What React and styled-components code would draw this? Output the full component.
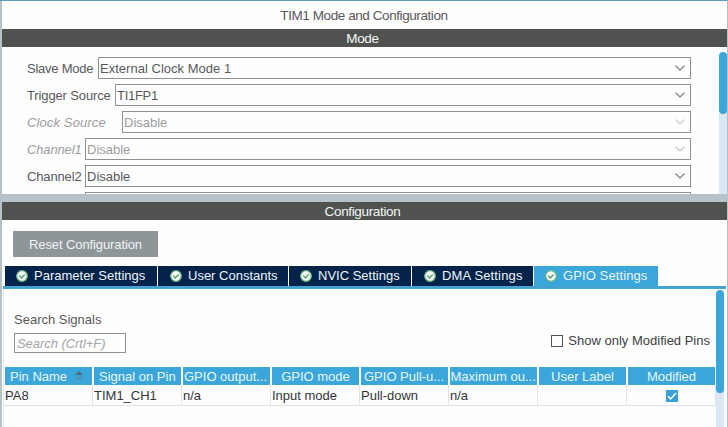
import React from 'react';
import styled, { createGlobalStyle } from 'styled-components';

const Global = createGlobalStyle`
  * { box-sizing: border-box; }
  body { margin: 0; overflow: hidden; background: #b6c1c8; }
`;

const Window = styled.div`
  width: 728px;
  height: 427px;
  display: flex;
  flex-direction: column;
  gap: 8px;
  border-top: 1px solid #5c99bd;
  border-right: 1px solid #b9bfc4;
  padding-left: 2px;
  background: #b6c1c8;
  font: 13px/18px 'Liberation Sans', Arial, sans-serif;
  color: #58595c;
  white-space: nowrap;
  overflow: hidden;
`;

const ModePanel = styled.section`
  height: 193px;
  display: flex;
  flex-direction: column;
  background: #fefefe;
  overflow: hidden;
`;

const Title = styled.h1`
  margin: 0;
  height: 28px;
  flex: none;
  font-size: 13.5px;
  font-weight: normal;
  line-height: 29px;
  letter-spacing: -0.42px;
  text-align: center;
  padding-right: 1px;
`;

const Bar = styled.h2`
  margin: 0;
  height: 18px;
  flex: none;
  font-size: 13.5px;
  font-weight: normal;
  line-height: 19px;
  letter-spacing: -0.35px;
  text-align: center;
  padding-right: 4px;
  color: #f4f6f6;
  background: #50524f;
`;

const ModeBody = styled.div`
  flex: 1;
  min-height: 0;
  display: flex;
  justify-content: space-between;
`;

const Fields = styled.div`
  width: 664px;
  margin: 10px 0 0 25px;
  display: flex;
  flex-direction: column;
  gap: 5px;
  overflow: hidden;
`;

const Field = styled.div`
  height: 22px;
  flex: none;
  display: flex;
  color: ${(p) => (p.$disabled ? '#9b9da0' : '#58595c')};
`;

const FieldLabel = styled.label`
  width: ${(p) => p.$width}px;
  flex: none;
  line-height: 23px;
  letter-spacing: ${(p) => p.$spacing || 0}px;
  font-style: ${(p) => (p.$disabled ? 'italic' : 'normal')};
`;

const Select = styled.div`
  flex: 1;
  display: flex;
  align-items: center;
  justify-content: space-between;
  border: 1px solid #8d9395;
  padding: 0 5px 0 1px;
  line-height: 21px;
  letter-spacing: ${(p) => p.$spacing || 0}px;
`;

const Track = styled.div`
  width: 8px;
  height: ${(p) => p.$height}px;
  flex: none;
  margin-top: ${(p) => p.$top}px;
  background: linear-gradient(#fefefe 4px, #dae8f5 4px);
`;

const Thumb = styled.div`
  height: ${(p) => p.$height}px;
  border-radius: 4px;
  background: #3aa6d9;
`;

const ConfigPanel = styled.section`
  flex: 1;
  display: flex;
  flex-direction: column;
  background: #fefefe;
  overflow: hidden;
`;

const ResetButton = styled.button`
  width: 145px;
  height: 26px;
  flex: none;
  margin: 11px 0 9px 11px;
  padding: 0;
  border: 0;
  font: inherit;
  line-height: 27px;
  letter-spacing: -0.1px;
  color: #f0f3f4;
  background: #8f9699;
`;

const Tabs = styled.nav`
  height: 23px;
  flex: none;
  display: flex;
  gap: 1px;
  margin: 0 1px;
  padding-left: 2px;
  border-bottom: 3px solid #43a2d0;
`;

const Tab = styled.div`
  width: ${(p) => p.$width}px;
  height: 20px;
  display: flex;
  align-items: center;
  gap: 6px;
  padding: 0 0 1px ${(p) => p.$inset}px;
  line-height: 19px;
  letter-spacing: ${(p) => p.$spacing || 0}px;
  color: #edf5fa;
  background: ${(p) => (p.$active ? '#3aa6d9' : '#03234b')};
`;

const TabBody = styled.div`
  flex: 1;
  min-height: 0;
  display: flex;
  margin: 0 3px 0 1px;
  border-left: 1px solid #e4e8eb;
`;

const Content = styled.div`
  width: 712px;
  padding: 22px 0 0 1px;
`;

const Filters = styled.div`
  display: flex;
  justify-content: space-between;
  height: 56px;
  padding: 0 6px 0 9px;
`;

const SearchGroup = styled.div`
  display: flex;
  flex-direction: column;
  gap: 5px;
`;

const SearchBox = styled.div`
  width: 112px;
  height: 20px;
  margin-top: -1px;
  padding-left: 2px;
  border: 1px solid #8d9395;
  font-style: italic;
  line-height: 19px;
  letter-spacing: -0.05px;
  color: #a3a5a7;
`;

const CheckLabel = styled.label`
  height: 18px;
  margin-top: 21px;
  display: flex;
  align-items: center;
  gap: 5px;
  color: #3f4043;
`;

const CheckBox = styled.span`
  width: 12px;
  height: 12px;
  border: 1px solid #525457;
`;

const Grid = styled.div`
  display: grid;
  grid-template-columns: repeat(8, 89px);
`;

const HeadCell = styled.div`
  height: 18px;
  margin-right: 2px;
  display: flex;
  align-items: center;
  justify-content: ${(p) => (p.$start ? 'flex-start' : 'center')};
  gap: 8px;
  padding-left: ${(p) => p.$start || 0}px;
  line-height: 19px;
  color: #e9f6fc;
  background: #3aa6d9;
  overflow: hidden;
`;

const Cell = styled.div`
  height: 21px;
  margin: 0 1px 0 -1px;
  padding: 1px 0 0 1px;
  line-height: 20px;
  color: #333437;
  border-right: 1px solid #dfe1e3;
  border-bottom: 1px solid #dfe1e3;
  display: flex;
  justify-content: ${(p) => (p.$center ? 'center' : 'flex-start')};
  align-items: center;
`;

const Chevron = ({ disabled }) => (
  <svg width="10" height="6" viewBox="0 0 10 6">
    <path d="M.5 .7 5 5 9.5 .7" fill="none" stroke={disabled ? '#c2c4c6' : '#707376'} strokeWidth="1.15" />
  </svg>
);

const StatusIcon = () => (
  <svg width="12" height="12" viewBox="0 0 12 12">
    <circle cx="6" cy="6" r="5.3" fill="#f4fbf4" stroke="#6db787" strokeWidth="1.2" />
    <path d="M3.2 5.6 5.4 8 8.8 4.4" fill="none" stroke="#4f9c68" strokeWidth="1.3" />
  </svg>
);

const SortIcon = () => (
  <svg width="8" height="10" viewBox="0 0 8 10">
    <path d="M0 4 4 0 8 4Z" fill="#4c6c7d" />
    <path d="M0 6H8L4 9.5Z" fill="#518eac" />
  </svg>
);

const CheckedIcon = () => (
  <svg width="12" height="12" viewBox="0 0 12 12">
    <path d="M0 0H12V12H0Z" fill="#39a1d3" />
    <path d="M2 6.2 4.7 9 10 3" fill="none" stroke="#fff" strokeWidth="1.5" />
  </svg>
);

const fields = [
  { label: 'Slave Mode', value: 'External Clock Mode 1', width: 71, spacing: -0.25, valueSpacing: 0.02 },
  { label: 'Trigger Source', value: 'TI1FP1', width: 88, spacing: -0.13, valueSpacing: -0.3 },
  { label: 'Clock Source', value: 'Disable', width: 95, disabled: true, spacing: 0.12 },
  { label: 'Channel1', value: 'Disable', width: 58, disabled: true, spacing: -0.15 },
  { label: 'Channel2', value: 'Disable', width: 58, spacing: -0.15 },
  { label: '', value: '', width: 58 },
];

const tabs = [
  { label: 'Parameter Settings', width: 152, inset: 11 },
  { label: 'User Constants', width: 130, inset: 12 },
  { label: 'NVIC Settings', width: 122, inset: 11 },
  { label: 'DMA Settings', width: 121, inset: 12, spacing: 0.15 },
  { label: 'GPIO Settings', width: 124, inset: 11, active: true, spacing: 0.1 },
];

const columns = [
  { label: 'Pin Name', value: 'PA8', sort: true, start: 5 },
  { label: 'Signal on Pin', value: 'TIM1_CH1', start: 5 },
  { label: 'GPIO output...', value: 'n/a', start: 1 },
  { label: 'GPIO mode', value: 'Input mode' },
  { label: 'GPIO Pull-u...', value: 'Pull-down', start: 3 },
  { label: 'Maximum ou...', value: 'n/a', start: 0.5 },
  { label: 'User Label', value: '' },
  { label: 'Modified', checked: true },
];

export default function App() {
  return (
    <>
      <Global />
      <Window>
        <ModePanel>
          <Title>TIM1 Mode and Configuration</Title>
          <Bar>Mode</Bar>
          <ModeBody>
            <Fields>
              {fields.map((f, i) => (
                <Field key={i} $disabled={f.disabled}>
                  <FieldLabel $width={f.width} $disabled={f.disabled} $spacing={f.spacing}>
                    {f.label}
                  </FieldLabel>
                  <Select $spacing={f.valueSpacing}>
                    <span>{f.value}</span>
                    <Chevron disabled={f.disabled} />
                  </Select>
                </Field>
              ))}
            </Fields>
            <Track $height={142} $top={5}>
              <Thumb $height={62} />
            </Track>
          </ModeBody>
        </ModePanel>
        <ConfigPanel>
          <Bar>Configuration</Bar>
          <ResetButton>Reset Configuration</ResetButton>
          <Tabs>
            {tabs.map((t) => (
              <Tab key={t.label} $width={t.width} $inset={t.inset} $active={t.active} $spacing={t.spacing}>
                <StatusIcon />
                {t.label}
              </Tab>
            ))}
          </Tabs>
          <TabBody>
            <Content>
              <Filters>
                <SearchGroup>
                  <span>Search Signals</span>
                  <SearchBox>Search (Crtl+F)</SearchBox>
                </SearchGroup>
                <CheckLabel>
                  <CheckBox />
                  Show only Modified Pins
                </CheckLabel>
              </Filters>
              <Grid>
                {columns.map((c) => (
                  <HeadCell key={c.label} $start={c.start}>
                    {c.label}
                    {c.sort && <SortIcon />}
                  </HeadCell>
                ))}
                {columns.map((c) => (
                  <Cell key={c.label} $center={c.checked}>
                    {c.checked ? <CheckedIcon /> : c.value}
                  </Cell>
                ))}
              </Grid>
            </Content>
            <Track $height={137} $top={1}>
              <Thumb $height={103} />
            </Track>
          </TabBody>
        </ConfigPanel>
      </Window>
    </>
  );
}
